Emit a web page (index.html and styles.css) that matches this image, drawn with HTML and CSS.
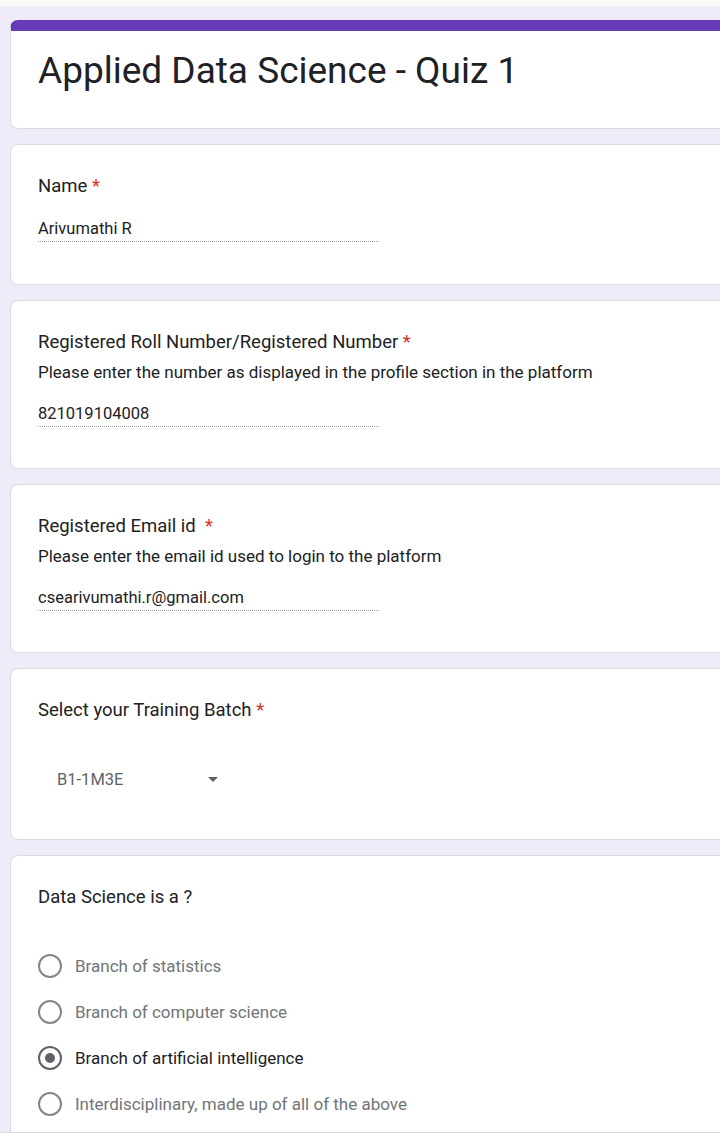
FILE: index.html
```html
<!DOCTYPE html>
<html>
<head>
<meta charset="utf-8">
<link rel="stylesheet" href="styles.css">
</head>
<body>
<div class="topstrip"></div>
<main class="form">
  <section class="card header">
    <h1 class="form-title">Applied Data Science - Quiz 1</h1>
  </section>

  <section class="card item">
    <div class="q-title">Name <span class="req">*</span></div>
    <div class="answer">Arivumathi R</div>
  </section>

  <section class="card item has-desc">
    <div class="q-title">Registered Roll Number/Registered Number <span class="req">*</span></div>
    <div class="q-desc">Please enter the number as displayed in the profile section in the platform</div>
    <div class="answer">821019104008</div>
  </section>

  <section class="card item has-desc">
    <div class="q-title">Registered Email id &nbsp;<span class="req">*</span></div>
    <div class="q-desc">Please enter the email id used to login to the platform</div>
    <div class="answer">csearivumathi.r@gmail.com</div>
  </section>

  <section class="card item select-item">
    <div class="q-title">Select your Training Batch <span class="req">*</span></div>
    <div class="dropdown">
      <span class="dd-value">B1-1M3E</span>
      <span class="dd-arrow"></span>
    </div>
  </section>

  <section class="card item radio-item">
    <div class="q-title">Data Science is a ?</div>
    <div class="options">
      <div class="option"><span class="radio"></span><span class="opt-label">Branch of statistics</span></div>
      <div class="option"><span class="radio"></span><span class="opt-label">Branch of computer science</span></div>
      <div class="option checked"><span class="radio"></span><span class="opt-label">Branch of artificial intelligence</span></div>
      <div class="option"><span class="radio"></span><span class="opt-label">Interdisciplinary, made up of all of the above</span></div>
    </div>
  </section>
</main>
<div class="bottombar"></div>
</body>
</html>
```

FILE: styles.css
```css
html, body {
  margin: 0;
  padding: 0;
}
body {
  background: #f0ebf8;
  font-family: Roboto, "Liberation Sans", Arial, sans-serif;
  color: #202124;
  overflow: hidden;
  height: 1144px;
}
.topstrip {
  height: 6px;
  background: #fbfaf8;
}
.form {
  display: flex;
  flex-direction: column;
  gap: 15px;
  padding: 14px 0 0 10px;
  width: 780px;
}
.card {
  background: #fff;
  border: 1px solid #dadce0;
  border-radius: 8px;
}
.header {
  border-top: 11px solid #673ab7;
  padding: 18px 27px 35px;
}
.form-title {
  margin: 0;
  font-weight: 400;
  font-size: 37px;
  line-height: 44px;
  color: #202124;
}
.item {
  padding: 29px 27px 42px;
}
.has-desc {
  padding-bottom: 41px;
}
.q-title {
  font-size: 18.5px;
  line-height: 24px;
  color: #202124;
}
.req {
  color: #d93025;
}
.q-desc {
  margin-top: 6px;
  font-size: 17px;
  line-height: 24px;
  color: #202124;
}
.answer {
  margin-top: 20px;
  width: 341px;
  font-size: 16.5px;
  line-height: 21px;
  padding-bottom: 2px;
  border-bottom: 1px dotted #9aa0a6;
  color: #202124;
}
.has-desc .answer {
  margin-top: 19px;
}
.select-item {
  padding-bottom: 36px;
}
.dropdown {
  margin-top: 33px;
  width: 192px;
  height: 48px;
  display: flex;
  align-items: center;
  justify-content: space-between;
  padding: 0 12px 0 19px;
  box-sizing: border-box;
  font-size: 16.5px;
  color: #5f6368;
}
.dd-arrow {
  width: 0;
  height: 0;
  border-left: 5px solid transparent;
  border-right: 5px solid transparent;
  border-top: 5px solid #5f6368;
}
.radio-item {
  padding-bottom: 60px;
}
.options {
  margin-top: 45px;
  display: flex;
  flex-direction: column;
  gap: 22px;
}
.option {
  display: flex;
  align-items: center;
  gap: 13px;
  height: 24px;
}
.radio {
  width: 20px;
  height: 20px;
  border: 2px solid #80868b;
  border-radius: 50%;
  box-sizing: content-box;
  display: flex;
  align-items: center;
  justify-content: center;
}
.option.checked .radio {
  border-color: #5f6368;
}
.option.checked .radio::after {
  content: "";
  width: 10px;
  height: 10px;
  border-radius: 50%;
  background: #5f6368;
}
.opt-label {
  font-size: 17px;
  line-height: 24px;
  color: #70757a;
}
.option.checked .opt-label {
  color: #202124;
}
.bottombar {
  position: fixed;
  left: 0;
  right: 0;
  bottom: 0;
  height: 11px;
  background: #fff;
  border-top: 1px solid #dadce0;
}
```
